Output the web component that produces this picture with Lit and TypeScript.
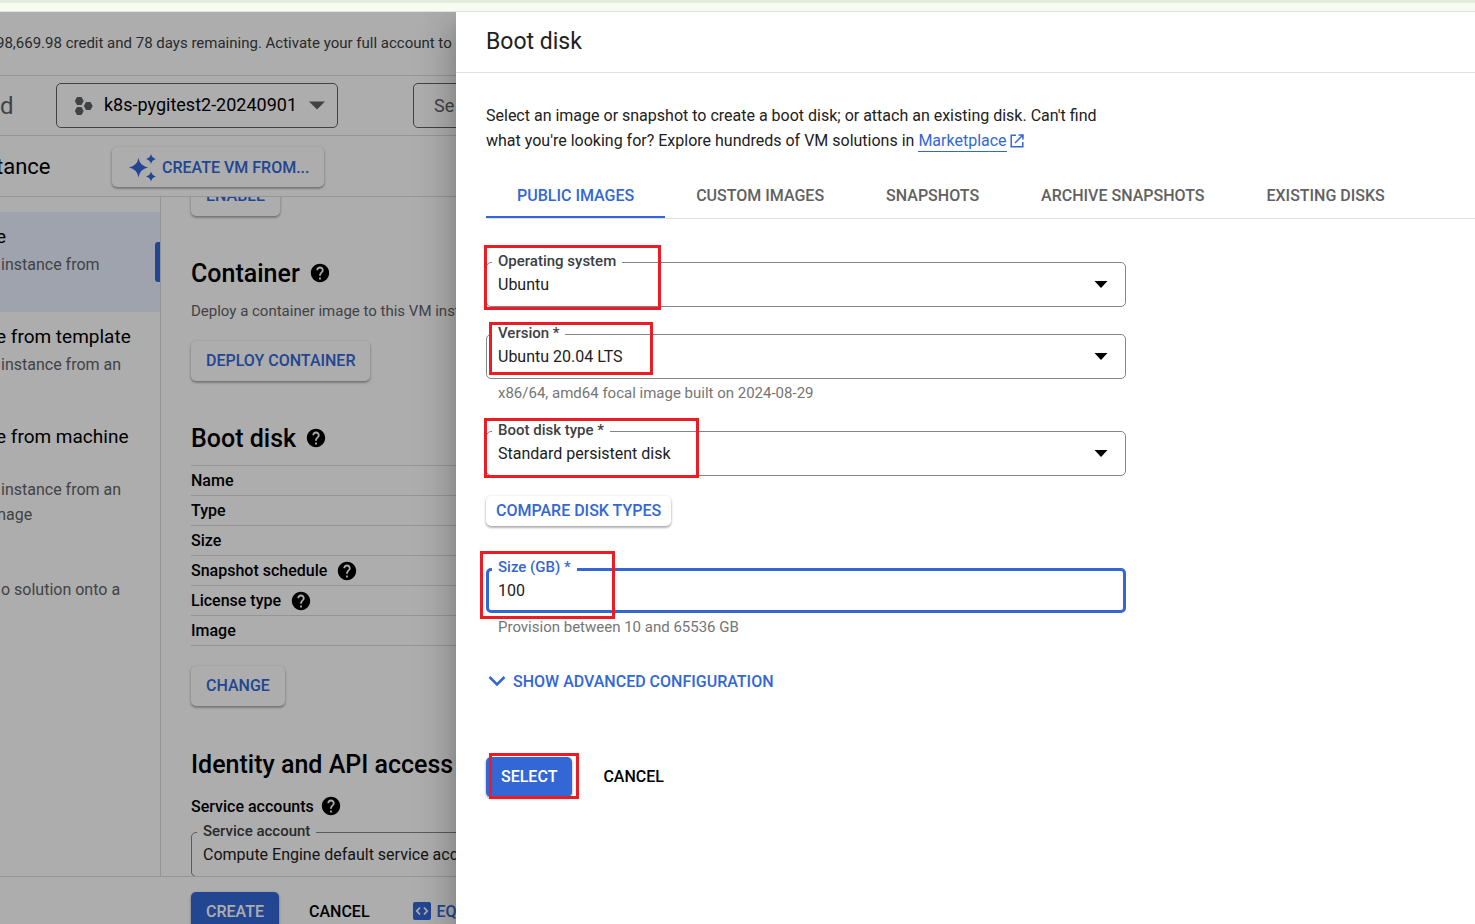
import { LitElement, html, css, nothing } from "lit";
import { customElement, property } from "lit/decorators.js";

const base = css`
  *,
  *::before,
  *::after {
    box-sizing: border-box;
  }
  button,
  input,
  select {
    font: inherit;
    color: inherit;
    margin: 0;
  }
  button {
    border: 0;
    padding: 0;
    background: none;
    cursor: pointer;
    white-space: nowrap;
  }
  h1,
  h2,
  h3,
  p {
    margin: 0;
    font-weight: 400;
  }
  svg {
    display: block;
    flex: none;
  }
  .btn {
    display: inline-flex;
    align-items: center;
    height: 40px;
    padding: 0 15px 2px;
    border-radius: 5px;
    font-size: 16px;
    font-weight: 500;
    color: #3367d6;
  }
  .raised {
    background: #fff;
    box-shadow: 0 1px 3px rgba(0, 0, 0, 0.3), 0 2px 2px rgba(0, 0, 0, 0.14);
  }
  .primary {
    background: #3367d6;
    color: #fff;
    box-shadow: 0 1px 3px rgba(0, 0, 0, 0.3), 0 2px 2px rgba(0, 0, 0, 0.14);
  }
  .plain {
    color: #000;
  }
`;

const helpIcon = html`<svg width="22" height="22" viewBox="0 0 24 24" fill="currentColor" aria-label="Help" role="img">
  <path d="M12 2C6.48 2 2 6.48 2 12s4.48 10 10 10 10-4.48 10-10S17.52 2 12 2zm1 17h-2v-2h2v2zm2.07-7.75l-.9.92C13.45 12.9 13 13.5 13 15h-2v-.5c0-1.1.45-2.1 1.17-2.83l1.24-1.26c.37-.36.59-.86.59-1.41 0-1.1-.9-2-2-2s-2 .9-2 2H8c0-2.21 1.79-4 4-4s4 1.79 4 4c0 .88-.36 1.68-.93 2.25z"/>
</svg>`;

@customElement("outlined-field")
class OutlinedField extends LitElement {
  @property() label = "";
  @property() value = "";
  @property() hint = "";
  @property() kind: "select" | "input" = "select";

  static styles = [
    base,
    css`
      :host {
        display: block;
      }
      .box {
        position: relative;
        display: flex;
        align-items: center;
        height: 45px;
        border: 1px solid #80868b;
        border-radius: 5px;
        font-size: 16px;
        color: #212121;
      }
      .box.focused {
        border: 3px solid #3367d6;
      }
      .label {
        position: absolute;
        top: -12px;
        left: 5px;
        padding: 0 6px;
        background: #fff;
        font-size: 15px;
        line-height: 20px;
        font-weight: 500;
        color: #3c4043;
        white-space: nowrap;
      }
      .focused .label {
        top: -14px;
        left: 3px;
        color: #3367d6;
      }
      .control {
        flex: 1;
        min-width: 0;
        height: 100%;
        padding: 0 11px;
        border: 0;
        outline: 0;
        background: transparent;
        appearance: none;
      }
      .focused .control {
        padding: 0 9px;
      }
      .arrow {
        position: absolute;
        right: 17px;
        pointer-events: none;
        color: #000;
      }
      .hint {
        margin-top: 4px;
        padding-left: 12px;
        font-size: 15px;
        line-height: 21px;
        color: #757575;
      }
    `,
  ];

  render() {
    const input = this.kind === "input";
    return html`
      <div class="box ${input ? "focused" : ""}">
        <label class="label" for="control">${this.label}</label>
        ${input
          ? html`<input class="control" id="control" inputmode="numeric" .value=${this.value} />`
          : html`<select class="control" id="control">
                <option>${this.value}</option>
              </select>
              <svg class="arrow" width="14" height="7" viewBox="0 0 14 7"><path d="M.5 0h13L7 7z" fill="currentColor" /></svg>`}
      </div>
      ${this.hint ? html`<p class="hint">${this.hint}</p>` : nothing}
    `;
  }
}

@customElement("console-page")
class ConsolePage extends LitElement {
  static styles = [
    base,
    css`
      :host {
        position: relative;
        display: flex;
        flex-direction: column;
        min-width: 0;
        overflow: hidden;
        background: #fff;
        color: #000;
        white-space: nowrap;
      }
      .scrim {
        position: absolute;
        inset: 0;
        background: rgba(0, 0, 0, 0.32);
        pointer-events: none;
      }
      .banner,
      .nav,
      .toolbar {
        display: flex;
        align-items: center;
        flex: none;
        border-bottom: 1px solid #dadce0;
      }
      .banner {
        height: 64px;
        padding-bottom: 2px;
        font-size: 15px;
        color: #3c4043;
      }
      .cut {
        text-indent: -4px;
      }
      .nav {
        height: 60px;
      }
      .brand {
        flex: none;
        width: 56px;
        font-size: 24px;
        color: #5f6368;
      }
      .project,
      .search {
        display: flex;
        align-items: center;
        flex: none;
        height: 45px;
        border: 1px solid #5f6368;
        border-radius: 5px;
      }
      .project {
        width: 282px;
        padding: 0 16px;
        gap: 11px;
        font-size: 18px;
      }
      .project .name {
        flex: 1;
        padding-bottom: 2px;
        text-align: left;
      }
      .project svg {
        color: #5f6368;
      }
      .search {
        width: 400px;
        margin-left: 75px;
        padding: 0 20px;
        font-size: 18px;
        background: #fff;
      }
      .search::placeholder {
        color: #5f6368;
        opacity: 1;
      }
      .toolbar {
        height: 61px;
      }
      .toolbar h1 {
        flex: none;
        width: 112px;
        font-size: 22px;
      }
      .toolbar .btn {
        gap: 6px;
        padding-bottom: 0;
        margin-top: 2px;
      }
      .work {
        flex: 1;
        min-height: 0;
        display: flex;
        overflow: hidden;
      }
      .side {
        flex: none;
        width: 161px;
        padding-top: 15px;
        border-right: 1px solid #dadce0;
        line-height: 25px;
        overflow: hidden;
      }
      .item {
        display: block;
        min-height: 100px;
        padding: 12px 0 10px;
        color: inherit;
        text-decoration: none;
        position: relative;
      }
      .item.active {
        background: #ebf1ff;
      }
      .item.active::after {
        content: "";
        position: absolute;
        right: 0;
        top: 30px;
        width: 5px;
        height: 40px;
        border-radius: 3px 0 0 3px;
        background: #3367d6;
      }
      .title {
        font-size: 19px;
        min-height: 25px;
        text-indent: -4px;
      }
      .title.tall {
        min-height: 50px;
      }
      .sub {
        margin-top: 3px;
        padding-left: 1px;
        font-size: 16px;
        color: #5f6368;
      }
      .clip {
        text-indent: -9px;
      }
      .content {
        flex: 1;
        min-width: 0;
        margin-top: -21px;
        padding-left: 30px;
        font-size: 16px;
      }
      .head {
        display: flex;
        align-items: center;
        gap: 9px;
        height: 30px;
        font-size: 25px;
        font-weight: 500;
      }
      .container {
        margin-top: 42px;
      }
      .desc {
        margin: 13px 0 20px;
        font-size: 15px;
        line-height: 20px;
        color: #5f6368;
      }
      .disk {
        margin-top: 42px;
      }
      .specs {
        width: 600px;
        margin: 12px 0 20px;
        border-collapse: collapse;
        font-weight: 500;
      }
      .specs th {
        height: 30px;
        padding: 0;
        border-top: 1px solid #dadce0;
        border-bottom: 1px solid #dadce0;
        font-weight: 500;
        text-align: left;
      }
      .row {
        display: flex;
        align-items: center;
        gap: 9px;
      }
      .identity {
        margin-top: 43px;
      }
      .accounts {
        margin: 16px 0 15px;
        gap: 6px;
        height: 22px;
        font-weight: 500;
        font-size: 16px;
      }
      .service {
        width: 600px;
      }
      .foot {
        flex: none;
        display: flex;
        align-items: flex-start;
        height: 48px;
        padding: 15px 0 0 191px;
        border-top: 1px solid #dadce0;
        gap: 15px;
        overflow: hidden;
      }
      .foot .btn {
        flex: none;
      }
      .code {
        gap: 6px;
        padding-left: 13px;
      }
    `,
  ];

  render() {
    const rows: [string, boolean][] = [
      ["Name", false],
      ["Type", false],
      ["Size", false],
      ["Snapshot schedule", true],
      ["License type", true],
      ["Image", false],
    ];
    return html`
      <div class="banner"><p class="cut">98,669.98 credit and 78 days remaining. Activate your full account to</p></div>
      <div class="nav">
        <div class="brand">d</div>
        <button class="project">
          <svg width="20" height="20" viewBox="0 0 20 20" fill="currentColor">
            <path d="M4 1h4.500l2.200 4-2.200 4H4L1.800 5zM4 11h4.500l2.200 4-2.200 4H4l-2.200-4zM13 6h4.500l2.200 4-2.200 4H13l-2.200-4z" />
          </svg>
          <span class="name">k8s-pygitest2-20240901</span>
          <svg width="18" height="9" viewBox="0 0 18 9"><path d="M1 0.500h16L9 8.500z" fill="currentColor" /></svg>
        </button>
        <input class="search" placeholder="Se" aria-label="Search" />
      </div>
      <div class="toolbar">
        <h1 class="cut">tance</h1>
        <button class="btn raised">
          <svg width="29" height="29" viewBox="0 0 29 29" fill="currentColor">
            <path d="M11.500 5Q13 13 21 14.500 13 16 11.500 24.500 10 16 2 14.500 10 13 11.500 5zM24 1Q24.900 5.100 29 6 24.900 6.900 24 11 23.100 6.900 19 6 23.100 5.100 24 1zM24 18.500Q24.900 22.600 29 23.500 24.900 24.400 24 28.500 23.100 24.400 19 23.500 23.100 22.600 24 18.500z" />
          </svg>
          CREATE VM FROM...
        </button>
      </div>
      <div class="work">
        <nav class="side">
          <a class="item active" href="#"><div class="title">e</div><div class="sub">instance from</div></a>
          <a class="item" href="#"><div class="title">e from template</div><div class="sub">instance from an</div></a>
          <a class="item" href="#">
            <div class="title tall">e from machine</div>
            <div class="sub">instance from an<div class="clip">mage</div></div>
          </a>
          <a class="item" href="#"><div class="title"></div><div class="sub">o solution onto a</div></a>
        </nav>
        <div class="content">
          <button class="btn raised">ENABLE</button>
          <h2 class="head container">Container ${helpIcon}</h2>
          <p class="desc">Deploy a container image to this VM instance</p>
          <button class="btn raised">DEPLOY CONTAINER</button>
          <h2 class="head disk">Boot disk ${helpIcon}</h2>
          <table class="specs">
            ${rows.map(
              ([name, help]) => html`<tr><th scope="row"><div class="row">${name} ${help ? helpIcon : nothing}</div></th></tr>`
            )}
          </table>
          <button class="btn raised">CHANGE</button>
          <h2 class="head identity">Identity and API access</h2>
          <h3 class="row accounts">Service accounts ${helpIcon}</h3>
          <outlined-field class="service" label="Service account" value="Compute Engine default service account"></outlined-field>
        </div>
      </div>
      <div class="foot">
        <button class="btn primary">CREATE</button>
        <button class="btn plain">CANCEL</button>
        <button class="btn code">
          <svg width="18" height="18" viewBox="0 0 18 18">
            <rect width="18" height="18" rx="2" fill="currentColor" />
            <path d="M7 5.500L3.800 9 7 12.500M11 5.500L14.200 9 11 12.500" fill="none" stroke="#fff" stroke-width="1.800" />
          </svg>
          EQUIVALENT CODE
        </button>
      </div>
      <div class="scrim"></div>
    `;
  }
}

@customElement("boot-disk-drawer")
class BootDiskDrawer extends LitElement {
  static styles = [
    base,
    css`
      :host {
        position: relative;
        display: block;
        min-width: 0;
        background: #fff;
        color: #212121;
        font-size: 16px;
        box-shadow: 0 10px 13px -6px rgba(0, 0, 0, 0.2), 0 20px 30px 3px rgba(0, 0, 0, 0.14),
          0 8px 38px 6px rgba(0, 0, 0, 0.12);
      }
      .header {
        display: flex;
        align-items: center;
        height: 61px;
        padding: 0 30px 2px;
        border-bottom: 1px solid #e0e0e0;
      }
      .header h2 {
        font-size: 23px;
      }
      .body {
        padding: 30px 0 30px 30px;
      }
      .intro {
        max-width: 640px;
        line-height: 25px;
      }
      .link {
        color: #3367d6;
        text-decoration: none;
        padding-bottom: 1px;
        border-bottom: 1px solid #3367d6;
      }
      .external {
        display: inline-block;
        margin-left: 3px;
        vertical-align: -2px;
        color: #3367d6;
      }
      .tabs {
        display: flex;
        margin-top: 20px;
        border-bottom: 1px solid #e0e0e0;
      }
      .tab {
        height: 45px;
        padding: 2px 31px 0;
        border-bottom: 2px solid transparent;
        font-weight: 500;
        color: #616161;
      }
      .tab.on {
        color: #3367d6;
        border-color: #3367d6;
      }
      .form {
        display: flex;
        flex-direction: column;
        align-items: flex-start;
        max-width: 640px;
        margin-top: 43px;
      }
      .group {
        position: relative;
        width: 100%;
        margin-bottom: 27px;
      }
      .disk-type {
        margin-bottom: 20px;
      }
      .compare {
        height: 30px;
        padding: 0 10px 2px;
        margin-bottom: 42px;
      }
      .size {
        margin-bottom: 33px;
      }
      .advanced {
        height: 20px;
        padding: 0 2px;
        gap: 7px;
        margin-bottom: 66px;
      }
      .actions {
        position: relative;
        display: flex;
        gap: 16px;
      }
      .mark {
        position: absolute;
        border: 3px solid #ed1c24;
        pointer-events: none;
      }
      .mark-os {
        left: -2px;
        top: -17px;
        width: 177px;
        height: 65px;
      }
      .mark-version {
        left: 3px;
        top: -12px;
        width: 164px;
        height: 53px;
      }
      .mark-type {
        left: -2px;
        top: -13px;
        width: 215px;
        height: 60px;
      }
      .mark-size {
        left: -6px;
        top: -17px;
        width: 135px;
        height: 68px;
      }
      .mark-select {
        left: 3px;
        top: -4px;
        width: 90px;
        height: 46px;
      }
    `,
  ];

  render() {
    const tabs = ["PUBLIC IMAGES", "CUSTOM IMAGES", "SNAPSHOTS", "ARCHIVE SNAPSHOTS", "EXISTING DISKS"];
    return html`
      <div class="header"><h2>Boot disk</h2></div>
      <div class="body">
        <p class="intro">
          Select an image or snapshot to create a boot disk; or attach an existing disk. Can't find what you're looking for?
          Explore hundreds of VM solutions in
          <a class="link" href="#">Marketplace</a
          ><svg class="external" width="14" height="14" viewBox="0 0 14 14" fill="none" stroke="currentColor" stroke-width="1.500">
            <path d="M6 1.200H1.200v11.600h11.600V8M8.500 1h4.500v4.500M13 1L5 9" />
          </svg>
        </p>
        <div class="tabs" role="tablist">
          ${tabs.map(
            (t, i) =>
              html`<button class="tab ${i === 0 ? "on" : ""}" role="tab" aria-selected=${i === 0 ? "true" : "false"}>${t}</button>`
          )}
        </div>
        <div class="form">
          <div class="group">
            <outlined-field label="Operating system" value="Ubuntu"></outlined-field>
            <div class="mark mark-os"></div>
          </div>
          <div class="group">
            <outlined-field
              label="Version *"
              value="Ubuntu 20.04 LTS"
              hint="x86/64, amd64 focal image built on 2024-08-29"
            ></outlined-field>
            <div class="mark mark-version"></div>
          </div>
          <div class="group disk-type">
            <outlined-field label="Boot disk type *" value="Standard persistent disk"></outlined-field>
            <div class="mark mark-type"></div>
          </div>
          <button class="btn raised compare">COMPARE DISK TYPES</button>
          <div class="group size">
            <outlined-field kind="input" label="Size (GB) *" value="100" hint="Provision between 10 and 65536 GB"></outlined-field>
            <div class="mark mark-size"></div>
          </div>
          <button class="btn advanced">
            <svg width="18" height="12" viewBox="0 0 18 12" fill="none" stroke="currentColor" stroke-width="2.500">
              <path d="M1.500 2L9 9.500 16.500 2" />
            </svg>
            SHOW ADVANCED CONFIGURATION
          </button>
          <div class="actions">
            <button class="btn primary">SELECT</button>
            <button class="btn plain">CANCEL</button>
            <div class="mark mark-select"></div>
          </div>
        </div>
      </div>
    `;
  }
}

@customElement("app-root")
class AppRoot extends LitElement {
  static styles = [
    base,
    css`
      :host {
        display: flex;
        flex-direction: column;
        height: 100vh;
        overflow: hidden;
        font-family: Roboto, "Liberation Sans", sans-serif;
      }
      .chrome {
        flex: none;
        height: 12px;
        border-top: 3px solid #e2ebdc;
        border-bottom: 1px solid #dfe3d9;
        background: #f8fbf1;
      }
      .stage {
        flex: 1;
        min-height: 0;
        display: grid;
        grid-template-columns: 456px minmax(0, 1fr);
        grid-template-rows: minmax(0, 1fr);
        overflow: hidden;
      }
    `,
  ];

  render() {
    return html`
      <div class="chrome"></div>
      <div class="stage">
        <console-page></console-page>
        <boot-disk-drawer></boot-disk-drawer>
      </div>
    `;
  }
}
